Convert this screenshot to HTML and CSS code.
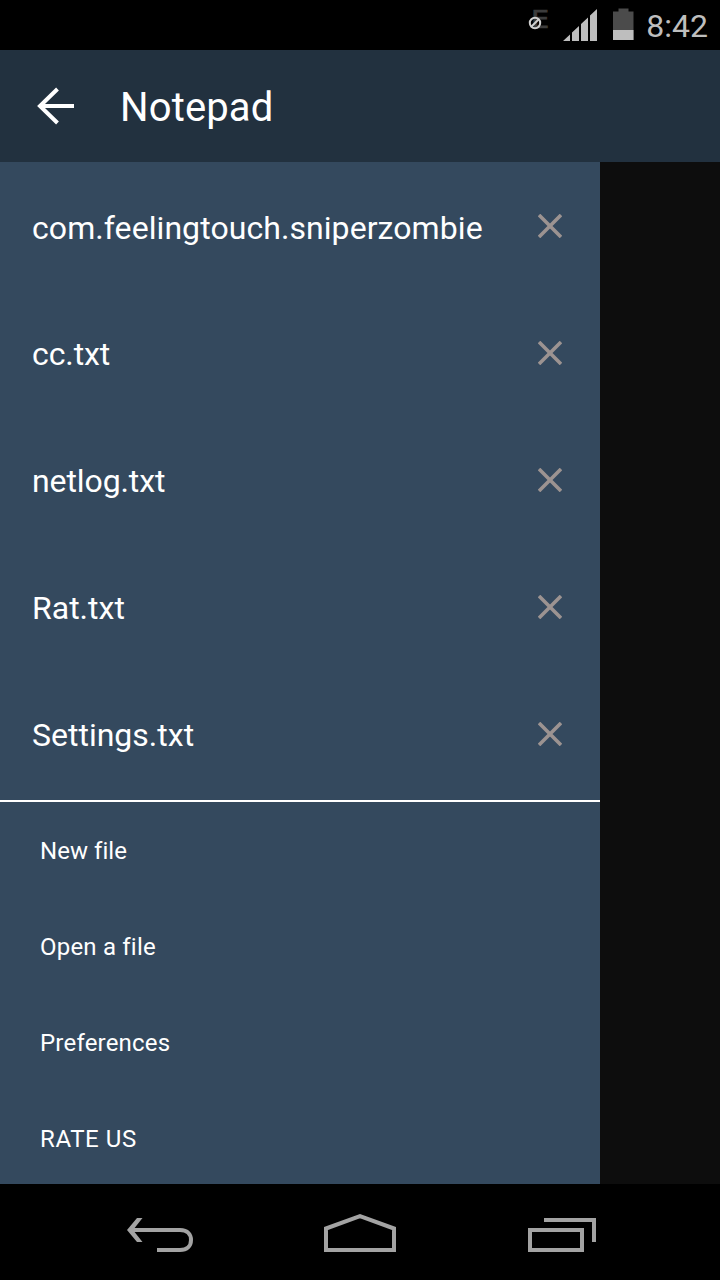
FILE: index.html
```html
<!DOCTYPE html>
<html lang="en">
<head>
  <meta charset="UTF-8">
  <meta name="viewport" content="width=device-width, initial-scale=1.0">
  <title>Notepad</title>
  <link rel="stylesheet" href="styles.css">
</head>
<body>

  <!-- Status bar -->
  <div class="status-bar">
    <div class="network">
      <span class="network-type">E</span>
      <svg class="network-off" width="14" height="14" viewBox="0 0 14 14">
        <circle cx="7" cy="7" r="5.2"/>
        <path d="M3.5 10.5L10.5 3.5"/>
      </svg>
    </div>
    <svg class="signal" width="34" height="32" viewBox="0 0 34 32">
      <path d="M0 32L7 25.4V32zM9 32V23.5L16 16.9V32zM18 32V15L25 8.4V32zM27 32V6.5L34 0V32z"/>
    </svg>
    <svg class="battery" width="21" height="32" viewBox="0 0 21 32">
      <path class="battery-body" d="M5.5 0.5h10v3H20.5V32H0V3.5h5.5z"/>
      <path class="battery-level" d="M0 22h20.5v10H0z"/>
    </svg>
    <span class="clock">8:42</span>
  </div>

  <!-- App bar -->
  <header class="app-bar">
    <svg class="back" width="40" height="40" viewBox="0 0 40 40">
      <path d="M39 20H6M22.5 3L5 20L22.5 37"/>
    </svg>
    <h1>Notepad</h1>
  </header>

  <!-- Drawer -->
  <main class="content">
    <nav class="drawer">
      <ul class="files">
        <li><span class="long">com.feelingtouch.sniperzombie</span><svg class="close" width="24" height="24" viewBox="0 0 24 24"><path d="M1 1L23 23M23 1L1 23"/></svg></li>
        <li><span>cc.txt</span><svg class="close" width="24" height="24" viewBox="0 0 24 24"><path d="M1 1L23 23M23 1L1 23"/></svg></li>
        <li><span>netlog.txt</span><svg class="close" width="24" height="24" viewBox="0 0 24 24"><path d="M1 1L23 23M23 1L1 23"/></svg></li>
        <li><span class="wide">Rat.txt</span><svg class="close" width="24" height="24" viewBox="0 0 24 24"><path d="M1 1L23 23M23 1L1 23"/></svg></li>
        <li><span class="wide">Settings.txt</span><svg class="close" width="24" height="24" viewBox="0 0 24 24"><path d="M1 1L23 23M23 1L1 23"/></svg></li>
      </ul>
      <ul class="menu">
        <li class="new">New file</li>
        <li>Open a file</li>
        <li>Preferences</li>
        <li class="rate">RATE US</li>
      </ul>
    </nav>
  </main>

  <!-- System navigation -->
  <footer class="nav-bar">
    <svg width="72" height="40" viewBox="0 0 72 40">
      <path d="M8 18H56C64 18 67 23 67 28C67 34 63 38 56 38H33"/>
      <path class="fill" d="M13 6H18.5L9 18L18.5 30H13L3 18z"/>
    </svg>
    <svg width="72" height="40" viewBox="0 0 72 40">
      <path d="M2 38V16.5L36 4.2L70 16.5V38z"/>
    </svg>
    <svg width="72" height="40" viewBox="0 0 72 40">
      <path d="M6 18H58V38H6zM20 8H70V30"/>
    </svg>
  </footer>

</body>
</html>
```

FILE: styles.css
```css
* {
  box-sizing: border-box;
}

body {
  margin: 0;
  width: 720px;
  height: 1280px;
  display: flex;
  flex-direction: column;
  overflow: hidden;
  background: #000;
  color: #fff;
  font-family: Roboto, sans-serif;
}

ul {
  list-style: none;
  margin: 0;
  padding: 0;
}

svg {
  display: block;
  flex: none;
}

/* Status bar */
.status-bar {
  height: 50px;
  display: flex;
  justify-content: flex-end;
  align-items: flex-start;
  padding: 8px 12px 0 0;
}

.network {
  position: relative;
  width: 21px;
  height: 24px;
  margin-right: 14px;
}

.network-type {
  display: block;
  margin-left: 3px;
  color: #3c3c3c;
  font-family: "DejaVu Sans", sans-serif;
  font-size: 25px;
  line-height: 24px;
  transform: scaleX(1.15);
  transform-origin: left;
  -webkit-text-stroke: 0.7px #3c3c3c;
}

.network-off {
  position: absolute;
  left: 0;
  top: 8px;
  fill: none;
  stroke: #d0d0d0;
  stroke-width: 2;
}

.signal {
  margin: 1px 16px 0 0;
  fill: #bebebe;
}

.battery {
  margin-right: 12px;
}

.battery-body {
  fill: #4b4b4b;
}

.battery-level {
  fill: #bebebe;
}

.clock {
  color: #bebebe;
  font-size: 32px;
  line-height: 36px;
}

/* App bar */
.app-bar {
  height: 112px;
  display: flex;
  align-items: center;
  padding-left: 35px;
  background: #22313f;
}

.back {
  fill: none;
  stroke: #fff;
  stroke-width: 4;
}

.app-bar h1 {
  margin: 4px 0 0 45px;
  font-size: 40px;
  font-weight: 400;
  letter-spacing: 0.15px;
  line-height: 48px;
}

/* Drawer */
.content {
  height: 1022px;
  overflow: hidden;
  background: #0d0d0d;
}

.drawer {
  width: 600px;
  background: #34495e;
}

.files {
  height: 640px;
  border-bottom: 2px solid #fff;
}

.files li {
  height: 127px;
  display: flex;
  justify-content: space-between;
  align-items: center;
  padding: 0 38px 0 32px;
  font-size: 32px;
  line-height: 40px;
}

.files span {
  padding-top: 2px;
  letter-spacing: -0.1px;
}

.files .long {
  padding-top: 4px;
  letter-spacing: 0.07px;
}

.files .wide {
  letter-spacing: 0;
}

.close {
  fill: none;
  stroke: #9c9391;
  stroke-width: 3.6;
}

.menu li {
  height: 96px;
  padding-left: 40px;
  font-size: 24px;
  letter-spacing: 0.2px;
  line-height: 99px;
}

.menu .new {
  letter-spacing: 0.05px;
}

.menu .rate {
  letter-spacing: 0.6px;
}

/* System navigation */
.nav-bar {
  height: 96px;
  display: flex;
  justify-content: center;
  gap: 128px;
  padding-top: 28px;
}

.nav-bar svg {
  fill: none;
  stroke: #a3a3a3;
  stroke-width: 4;
}

.nav-bar .fill {
  fill: #a3a3a3;
  stroke: none;
}
```
